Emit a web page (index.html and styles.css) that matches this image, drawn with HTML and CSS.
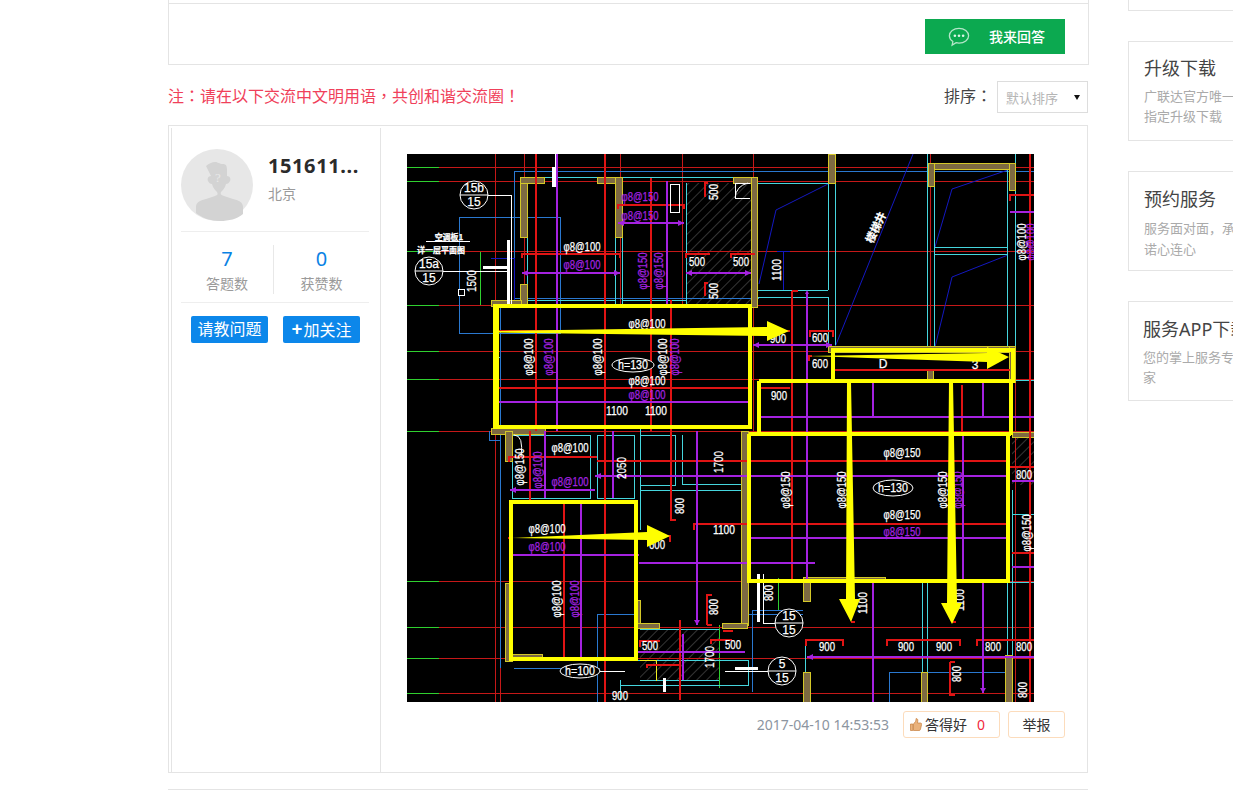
FILE: index.html
```html
<!DOCTYPE html>
<html lang="zh-CN">
<head>
<meta charset="utf-8">
<title>答疑详情</title>
<link rel="stylesheet" href="styles.css">
</head>
<body>
<div class="page">
  <main class="main">
    <section class="answer-box">
      <div class="answer-inner">
        <a class="answer-btn">
          <svg class="chat-icon" viewBox="0 0 24 24" width="24" height="22"><path class="chat-line" d="M12 2.500c-5.800 0-10.500 3.600-10.500 8.200 0 2.600 1.500 4.800 3.800 6.300l-.8 3.800 4.300-2.600c1 .2 2 .4 3.200.4 5.800 0 10.500-3.500 10.500-7.900S17.800 2.500 12 2.500z"/><circle class="chat-dot" cx="7.500" cy="10.700" r="1.400"/><circle class="chat-dot" cx="12" cy="10.700" r="1.400"/><circle class="chat-dot" cx="16.500" cy="10.700" r="1.400"/></svg>
          <span>我来回答</span>
        </a>
      </div>
    </section>

    <div class="notice-row">
      <p class="notice" lang="zh-Hant">注：请在以下交流中文明用语，共创和谐交流圈！</p>
      <div class="sort">
        <span class="sort-label" lang="zh-Hant">排序：</span>
        <div class="sort-select"><span>默认排序</span><i class="caret"></i></div>
      </div>
    </div>

    <article class="reply">
      <aside class="author">
        <div class="author-head">
          <svg class="avatar" viewBox="0 0 72 72" width="72" height="72">
            <circle class="avatar-bg" cx="36" cy="36" r="36"/>
            <path class="avatar-fg" d="M25 17c4-3 6-4 9-4 3 0 4 2 8 2 3 0 4 2 4 6v6c3 0 4 3 3 5-1 2-2 3-4 3-1 4-3 6-5 8-1 2 0 3 3 4l9 3c5 1 10 3 10 8v7c-6 5-14 7-23 7s-18-3-24-8v-6c0-5 5-7 10-8l9-3c3-1 3-2 2-4-2-2-4-4-5-8-2 0-3-1-4-3-1-2 0-5 3-5z"/>
            <text class="avatar-q" x="37" y="28">?</text>
          </svg>
          <div class="author-meta">
            <div class="author-name">151611...</div>
            <div class="author-city">北京</div>
          </div>
        </div>
        <div class="stats">
          <div class="stat"><b>7</b><span>答题数</span></div>
          <div class="stat stat-last"><b>0</b><span>获赞数</span></div>
        </div>
        <div class="author-actions">
          <a class="blue-btn">请教问题</a>
          <a class="blue-btn"><em>+</em>加关注</a>
        </div>
      </aside>

      <div class="reply-body">
        <svg class="cad" viewBox="407 154 627 548" width="627" height="548">
          <defs>
            <pattern id="hatch" width="7" height="7" patternUnits="userSpaceOnUse" patternTransform="rotate(45)"><line class="hatch-line" x1="0" y1="0" x2="0" y2="7"/></pattern>
          </defs>
          <rect class="bg" x="407" y="154" width="627" height="548"/>

          <rect class="hatch" x="686" y="183" width="65" height="122"/>
          <rect class="hatch" x="640" y="629" width="79" height="51"/>
          <rect class="hatch" x="1012" y="435" width="22" height="50"/>

          <path class="green" d="M407 167H439M407 181H439M407 251H439M407 305H439M407 351H439M407 379H439M407 431H439M407 581H439M407 627H439M407 658H439M407 693H439M480 251V306M719 625V688M778 578V610M605 688V702"/>
          <path class="thin-red" d="M439 167H1034M439 181H1034M439 251H1034M439 305H1034M439 351H1034M439 379H1034M439 431H1034M439 581H1034M439 627H1034M439 658H1034M439 693H1034M495 154V702M500 431V702M524 154V305M620 154V305M682 154V305M753 154V432M930 154V348M1015 154V702"/>
          <path class="blue" d="M514 305V171H1034M459 217H560V333H459ZM500 305V431M489 431V440H500M514 668H600M500 668V431M597 702V614H640M752 692V610H803M747 614H803M889 702V672H1007M759 298H514V305M748 565V610M595 660H640"/>
          <path class="navy" d="M759 284L776 210L828 184M835 347L913 154M935 247L952 189L1008 170M935 347L952 277L1008 255"/>
          <path class="navy-grid" d="M491 258H514V305M777 251H790M777 290H790M783 251V290"/>
          <path class="cyan" d="M522 177H751M527 183V305M615 183V305M622 183V305M686 183V305M757 183V307M757 183H828M828 183V290M757 290H828M757 297H828M828 297V346M835 154V345M927 154V347M934 169V347M1007 169V347M934 247H1007M934 254H1007M1015 154V347M527 300H615M622 300H686M512 435H590V498H512ZM597 435H634V498H597ZM640 435H675V485H640ZM682 435V484H747M640 490H747M640 485V530M1012 380H1034M1012 490V640M1012 514H1034M1012 582H1034M922 582V672M927 582V672M805 582H1012M1007 582V702M640 680H719M640 629H719M620 680V700M805 640V702M510 428H640M634 660H748V685H620M497 357H500M1012 640V702M640 435V428"/>
          <path class="thin-yellow" d="M640 660H656V681"/>

          <rect class="wall" x="520" y="177" width="7" height="60"/>
          <rect class="wall" x="520" y="177" width="24" height="6"/>
          <rect class="wall" x="597" y="177" width="25" height="6"/>
          <rect class="wall" x="615" y="177" width="7" height="60"/>
          <rect class="wall" x="520" y="284" width="7" height="22"/>
          <rect class="wall" x="491" y="300" width="30" height="6"/>
          <rect class="wall" x="733" y="177" width="24" height="6"/>
          <rect class="wall" x="751" y="177" width="6" height="130"/>
          <rect class="wall" x="828" y="154" width="7" height="29"/>
          <rect class="wall" x="928" y="163" width="87" height="6"/>
          <rect class="wall" x="928" y="163" width="6" height="23"/>
          <rect class="wall" x="1009" y="163" width="6" height="27"/>
          <rect class="wall" x="828" y="346" width="187" height="6"/>
          <rect class="wall" x="1009" y="346" width="6" height="36"/>
          <rect class="wall" x="927" y="370" width="6" height="10"/>
          <rect class="wall" x="491" y="428" width="54" height="6"/>
          <rect class="wall" x="505" y="431" width="7" height="30"/>
          <rect class="wall" x="505" y="583" width="7" height="78"/>
          <rect class="wall" x="512" y="654" width="30" height="6"/>
          <rect class="wall" x="635" y="600" width="5" height="28"/>
          <rect class="wall" x="635" y="623" width="24" height="5"/>
          <rect class="wall" x="741" y="431" width="7" height="194"/>
          <rect class="wall" x="722" y="623" width="25" height="5"/>
          <rect class="wall" x="803" y="577" width="82" height="5"/>
          <rect class="wall" x="803" y="582" width="7" height="19"/>
          <rect class="wall" x="803" y="672" width="7" height="30"/>
          <rect class="wall" x="921" y="672" width="6" height="30"/>
          <rect class="wall" x="1005" y="655" width="7" height="47"/>
          <rect class="wall" x="1012" y="432" width="22" height="5"/>

          <path class="red" d="M536 154V431M605 154V702M651 178V431M671 300V520H676M522 258V254H620V258M618 209V205H684V209M705 197V183H708M705 296V283H708M686 258V254H710M731 258V254H755M810 337V331H833V337M497 331H790M497 388H750M792 291V581M792 291H798M757 388H790M809 361V356H812M835 370H1010M1010 201V195H1034M1030 154V702M509 462V457H597M530 431V503M564 502V658M597 461H1008M508 538H512M700 524H747M694 530V524H700M747 524H1008M707 625H712M707 625V595H712M1010 467H1034M1012 553H1034M806 646V640H843V646M887 646V640H960V646M977 646V640H1034M950 662H955M950 662V695H955M640 647V641H660M647 668V665H680M711 644V640H732M723 631H733M680 620V700M851 622H855M952 622H956M639 536H670V542M962 385V432"/>
          <path class="purple" d="M557 154V431M667 181V305M522 273H620M618 223H684M686 273H751M753 345H832M807 294V581M497 402H750M758 417H1034M873 383V417M983 383V417M1010 212H1034M545 431V498M613 431V498M510 490H595M595 476H1008M581 502V658M512 555H639M639 563H815M697 431V625M747 538H1008M963 432V580M637 652H745M1012 481H1034M1012 567H1034M807 657H1034M873 582V702M983 582V693M683 634V680"/>
          <path class="arrow-tips" d="M522 273l6-3v6zM620 273l-6-3v6zM618 223l6-3v6zM684 223l-6-3v6zM686 273l6-3v6zM751 273l-6-3v6zM753 345l6-3v6zM832 345l-6-3v6zM805 294l2-4 2 4zM510 490l6-3v6zM595 476l6-3v6zM639 555l-5-3v6zM807 657l6-3v6zM983 693l-3-5h6zM697 625l-3-5h6z"/>

          <path class="white-thick" d="M508 240V304M483 267H507M758 574V622M735 668H758M664 678V692M553 167V187"/>
          <path class="white-line" d="M487 195H511V305M443 271H507M426 241H470M555 154V187M763 574V623H775M725 671H768M600 671H625M670 184H679V212H670V184M735 198V183H750M735 198H750"/>
          <path class="white-curve" d="M735 198Q736 186 748 183M514 435Q524 435 521 457"/>
          <rect class="white-square" x="458" y="289" width="6" height="6"/>

          <g class="bubble">
            <circle cx="474" cy="195" r="14"/><path d="M460 195H488"/>
            <circle cx="429" cy="271" r="14"/><path d="M415 271H443"/>
            <circle cx="789" cy="623" r="14"/><path d="M775 623H803"/>
            <circle cx="782" cy="671" r="14"/><path d="M768 671H796"/>
            <ellipse cx="633" cy="365" rx="21" ry="7"/>
            <ellipse cx="893" cy="488" rx="20" ry="8"/>
            <ellipse cx="580" cy="671" rx="20" ry="7"/>
          </g>

          <g class="t">
            <text x="474" y="188">15b</text><text x="474" y="202">15</text>
            <text x="429" y="264">15a</text><text x="429" y="278">15</text>
            <text x="789" y="616">15</text><text x="789" y="630">15</text>
            <text x="782" y="664">5</text><text x="782" y="678">15</text>
            <text class="t-small" x="449" y="236">空调板1</text>
            <text class="t-small" x="441" y="249">详一层平面图</text>
            <text x="582" y="247" textLength="37" lengthAdjust="spacingAndGlyphs">φ8@100</text>
            <text x="647" y="324" textLength="37" lengthAdjust="spacingAndGlyphs">φ8@100</text>
            <text x="647" y="381" textLength="37" lengthAdjust="spacingAndGlyphs">φ8@100</text>
            <text x="570" y="448" textLength="37" lengthAdjust="spacingAndGlyphs">φ8@100</text>
            <text x="547" y="529" textLength="37" lengthAdjust="spacingAndGlyphs">φ8@100</text>
            <text x="902" y="453" textLength="37" lengthAdjust="spacingAndGlyphs">φ8@150</text>
            <text x="902" y="515" textLength="37" lengthAdjust="spacingAndGlyphs">φ8@150</text>
            <text x="633" y="365" textLength="30" lengthAdjust="spacingAndGlyphs">h=130</text>
            <text x="893" y="488" textLength="30" lengthAdjust="spacingAndGlyphs">h=130</text>
            <text x="580" y="671" textLength="30" lengthAdjust="spacingAndGlyphs">h=100</text>
            <text x="617" y="411" textLength="22" lengthAdjust="spacingAndGlyphs">1100</text>
            <text x="656" y="411" textLength="22" lengthAdjust="spacingAndGlyphs">1100</text>
            <text x="697" y="262" textLength="16" lengthAdjust="spacingAndGlyphs">500</text>
            <text x="741" y="262" textLength="16" lengthAdjust="spacingAndGlyphs">500</text>
            <text x="778" y="339" textLength="16" lengthAdjust="spacingAndGlyphs">900</text>
            <text x="820" y="338" textLength="16" lengthAdjust="spacingAndGlyphs">600</text>
            <text x="820" y="364" textLength="16" lengthAdjust="spacingAndGlyphs">600</text>
            <text x="883" y="364">D</text><text x="975" y="365">3</text>
            <text x="779" y="396" textLength="16" lengthAdjust="spacingAndGlyphs">900</text>
            <text x="724" y="530" textLength="22" lengthAdjust="spacingAndGlyphs">1100</text>
            <text x="657" y="545" textLength="16" lengthAdjust="spacingAndGlyphs">600</text>
            <text x="650" y="646" textLength="16" lengthAdjust="spacingAndGlyphs">500</text>
            <text x="733" y="645" textLength="16" lengthAdjust="spacingAndGlyphs">500</text>
            <text x="620" y="696" textLength="16" lengthAdjust="spacingAndGlyphs">900</text>
            <text x="827" y="647" textLength="16" lengthAdjust="spacingAndGlyphs">900</text>
            <text x="906" y="647" textLength="16" lengthAdjust="spacingAndGlyphs">900</text>
            <text x="944" y="647" textLength="16" lengthAdjust="spacingAndGlyphs">900</text>
            <text x="993" y="647" textLength="16" lengthAdjust="spacingAndGlyphs">800</text>
            <text x="1024" y="647" textLength="16" lengthAdjust="spacingAndGlyphs">800</text>
            <text x="1024" y="475" textLength="16" lengthAdjust="spacingAndGlyphs">800</text>
            <text transform="rotate(-90 472 281)" x="472" y="281" textLength="22" lengthAdjust="spacingAndGlyphs">1500</text>
            <text transform="rotate(-90 714 192)" x="714" y="192" textLength="16" lengthAdjust="spacingAndGlyphs">500</text>
            <text transform="rotate(-90 714 291)" x="714" y="291" textLength="16" lengthAdjust="spacingAndGlyphs">500</text>
            <text transform="rotate(-90 777 270)" x="777" y="270" textLength="22" lengthAdjust="spacingAndGlyphs">1100</text>
            <text transform="rotate(-90 622 468)" x="622" y="468" textLength="22" lengthAdjust="spacingAndGlyphs">2050</text>
            <text transform="rotate(-90 719 462)" x="719" y="462" textLength="22" lengthAdjust="spacingAndGlyphs">1700</text>
            <text transform="rotate(-90 680 506)" x="680" y="506" textLength="16" lengthAdjust="spacingAndGlyphs">800</text>
            <text transform="rotate(-90 710 657)" x="710" y="657" textLength="22" lengthAdjust="spacingAndGlyphs">1700</text>
            <text transform="rotate(-90 714 607)" x="714" y="607" textLength="16" lengthAdjust="spacingAndGlyphs">800</text>
            <text transform="rotate(-90 769 593)" x="769" y="593" textLength="16" lengthAdjust="spacingAndGlyphs">800</text>
            <text transform="rotate(-90 863 603)" x="863" y="603" textLength="22" lengthAdjust="spacingAndGlyphs">1100</text>
            <text transform="rotate(-90 960 600)" x="960" y="600" textLength="22" lengthAdjust="spacingAndGlyphs">1100</text>
            <text transform="rotate(-90 957 674)" x="957" y="674" textLength="16" lengthAdjust="spacingAndGlyphs">800</text>
            <text transform="rotate(-90 1023 690)" x="1023" y="690" textLength="16" lengthAdjust="spacingAndGlyphs">800</text>
            <text transform="rotate(-90 529 357)" x="529" y="357" textLength="37" lengthAdjust="spacingAndGlyphs">φ8@100</text>
            <text transform="rotate(-90 598 357)" x="598" y="357" textLength="37" lengthAdjust="spacingAndGlyphs">φ8@100</text>
            <text transform="rotate(-90 663 357)" x="663" y="357" textLength="37" lengthAdjust="spacingAndGlyphs">φ8@100</text>
            <text transform="rotate(-90 1022 242)" x="1022" y="242" textLength="37" lengthAdjust="spacingAndGlyphs">φ8@100</text>
            <text transform="rotate(-90 520 467)" x="520" y="467" textLength="37" lengthAdjust="spacingAndGlyphs">φ8@150</text>
            <text transform="rotate(-90 557 599)" x="557" y="599" textLength="37" lengthAdjust="spacingAndGlyphs">φ8@100</text>
            <text transform="rotate(-90 786 490)" x="786" y="490" textLength="37" lengthAdjust="spacingAndGlyphs">φ8@150</text>
            <text transform="rotate(-90 842 490)" x="842" y="490" textLength="37" lengthAdjust="spacingAndGlyphs">φ8@150</text>
            <text transform="rotate(-90 943 490)" x="943" y="490" textLength="37" lengthAdjust="spacingAndGlyphs">φ8@150</text>
            <text transform="rotate(-90 1027 533)" x="1027" y="533" textLength="37" lengthAdjust="spacingAndGlyphs">φ8@150</text>
            <text class="t-diag" transform="rotate(-65 875 227)" x="875" y="227">楼梯井</text>
          </g>
          <g class="t tp">
            <text x="582" y="265" textLength="37" lengthAdjust="spacingAndGlyphs">φ8@100</text>
            <text x="640" y="197" textLength="37" lengthAdjust="spacingAndGlyphs">φ8@150</text>
            <text x="640" y="216" textLength="37" lengthAdjust="spacingAndGlyphs">φ8@150</text>
            <text x="647" y="395" textLength="37" lengthAdjust="spacingAndGlyphs">φ8@100</text>
            <text x="570" y="482" textLength="37" lengthAdjust="spacingAndGlyphs">φ8@100</text>
            <text x="547" y="547" textLength="37" lengthAdjust="spacingAndGlyphs">φ8@100</text>
            <text x="902" y="532" textLength="37" lengthAdjust="spacingAndGlyphs">φ8@150</text>
            <text transform="rotate(-90 643 271)" x="643" y="271" textLength="37" lengthAdjust="spacingAndGlyphs">φ8@150</text>
            <text transform="rotate(-90 659 271)" x="659" y="271" textLength="37" lengthAdjust="spacingAndGlyphs">φ8@150</text>
            <text transform="rotate(-90 549 357)" x="549" y="357" textLength="37" lengthAdjust="spacingAndGlyphs">φ8@100</text>
            <text transform="rotate(-90 675 357)" x="675" y="357" textLength="37" lengthAdjust="spacingAndGlyphs">φ8@100</text>
            <text transform="rotate(-90 538 470)" x="538" y="470" textLength="37" lengthAdjust="spacingAndGlyphs">φ8@100</text>
            <text transform="rotate(-90 575 599)" x="575" y="599" textLength="37" lengthAdjust="spacingAndGlyphs">φ8@100</text>
            <text transform="rotate(-90 958 490)" x="958" y="490" textLength="37" lengthAdjust="spacingAndGlyphs">φ8@150</text>
            <text transform="rotate(-90 1031 242)" x="1031" y="242" textLength="37" lengthAdjust="spacingAndGlyphs">φ8@100</text>
          </g>

          <path class="marker" d="M495 306H750V427H495Z"/>
          <path class="marker-heavy" d="M496 306V427"/>
          <path class="marker" d="M759 381H1011V435M759 381V434"/>
          <path class="marker" d="M833 350H1013V381H833Z"/>
          <path class="marker" d="M749 434H1011M749 434V581H1008V434"/>
          <path class="marker" d="M511 502H636V659H511Z"/>
          <polygon class="fill-yellow" points="497,331 767,327 767,321 789,331 767,341 767,336 497,332.500"/>
          <polygon class="fill-yellow" points="808,356 987,353 987,347 1009,357 987,369 987,362"/>
          <polygon class="fill-yellow" points="512,538 647,532 647,525 670,536 647,547 647,540"/>
          <polygon class="fill-yellow" points="847,382 851,382 855,599 860,599 851,622 839,599 846,599"/>
          <polygon class="fill-yellow" points="949,382 953,382 957,603 962,603 952,624 941,603 947,603"/>
        </svg>

        <footer class="reply-foot">
          <time class="time">2017-04-10 14:53:53</time>
          <a class="ghost-btn good">
            <svg class="thumb" viewBox="0 0 12 13" width="12" height="13"><path class="thumb-fill" d="M.500 6h2.300v6.500H.500zM3.500 6l2-2.500c.5-.8.500-2 .6-3 1.200 0 1.900 1 1.700 2.300L7.500 5h3c.9 0 1.300.8 1.100 1.500l-1.200 5c-.2.700-.6 1-1.300 1H3.500z"/></svg>
            <span>答得好</span><b>0</b>
          </a>
          <a class="ghost-btn report">举报</a>
        </footer>
      </div>
    </article>
    <div class="rule"></div>
  </main>

  <aside class="side">
    <div class="card card-cut"></div>
    <div class="card card-first">
      <h3>升级下载</h3>
      <p>广联达官方唯一<br>指定升级下载</p>
    </div>
    <div class="card card-loose">
      <h3>预约服务</h3>
      <p>服务面对面，承<br>诺心连心</p>
    </div>
    <div class="card card-app">
      <h3>服务APP下载</h3>
      <p>您的掌上服务专<br>家</p>
    </div>
  </aside>
</div>
</body>
</html>
```

FILE: styles.css
```css
* { box-sizing: border-box; }
html, body { margin: 0; padding: 0; height: 810px; overflow: hidden; background: #fff; }
body { font-family: "Noto Sans", "Noto Sans CJK SC", sans-serif; color: #333; }
p, h3 { margin: 0; font-weight: normal; }
a { display: block; }

.page { display: flex; align-items: flex-start; padding-left: 168px; width: 1500px; }
.main { width: 921px; flex: none; }

.answer-box { border: 1px solid #e4e4e4; border-top: 0; padding-top: 3px; height: 65px; }
.answer-inner { border-top: 1px solid #e4e4e4; height: 61px; padding: 15px 23px 0 0; display: flex; justify-content: flex-end; }
.answer-btn { width: 140px; height: 35px; background: #0ca950; color: #fff; display: flex; align-items: center; font-size: 14px; line-height: 20px; padding-left: 22px; gap: 18px; font-weight: 500; }
.chat-icon { flex: none; }
.chat-line { fill: none; stroke: #b5e6c9; stroke-width: 1.4; }
.chat-dot { fill: #dff5e8; }

.notice-row { width: 920px; margin-top: 16px; height: 32px; display: flex; justify-content: space-between; align-items: center; }
.notice { font-family: "Noto Sans CJK TC", sans-serif; font-size: 16px; line-height: 28px; color: #f0405a; margin-bottom: 4px; }
.sort { display: flex; align-items: center; }
.sort-label { font-family: "Noto Sans CJK TC", sans-serif; font-size: 16px; line-height: 24px; color: #444; width: 53px; margin-bottom: 4px; }
.sort-select { width: 91px; height: 32px; border: 1px solid #ddd; display: flex; align-items: center; justify-content: space-between; padding: 1px 7px 0 8px; font-size: 13px; color: #b5b5b5; }
.caret { width: 0; height: 0; border-left: 3.500px solid transparent; border-right: 3.500px solid transparent; border-top: 5px solid #111; }

.reply { width: 920px; height: 648px; margin-top: 12px; border: 1px solid #e4e4e4; display: flex; padding-top: 2px; }
.author { width: 210px; flex: none; margin-left: 2px; border-left: 1px solid #e4e4e4; border-right: 1px solid #e4e4e4; padding: 21px 11px 0 9px; }
.author-head { display: flex; gap: 15px; border-bottom: 1px solid #eee; height: 83px; }
.avatar { flex: none; }
.avatar-bg { fill: #e7e7e7; }
.avatar-fg { fill: #d3d3d3; }
.avatar-q { fill: #e8e8e8; font-size: 13px; text-anchor: middle; dominant-baseline: central; font-family: "Liberation Serif", serif; }
.author-name { font-size: 20px; line-height: 28px; font-weight: 700; color: #2b2b2b; margin-top: 3px; letter-spacing: .6px; white-space: nowrap; }
.author-city { font-size: 14px; line-height: 20px; color: #9a9a9a; margin-top: 4px; }

.stats { display: flex; height: 71px; border-bottom: 1px solid #eee; padding-top: 13px; }
.stat { width: 93px; height: 49px; border-right: 1px solid #e8e8e8; display: flex; flex-direction: column; align-items: center; }
.stat-last { width: 95px; border-right: 0; }
.stat b { font-size: 20px; line-height: 28px; font-weight: 400; color: #0a82e4; }
.stat span { font-size: 14px; line-height: 20px; color: #9a9a9a; margin-top: 1px; }

.author-actions { display: flex; gap: 15px; margin: 13px 0 0 10px; }
.blue-btn { width: 77px; height: 27px; background: #0c87ea; color: #fff; border-radius: 2px; font-size: 16px; line-height: 27px; text-align: center; white-space: nowrap; }
.blue-btn em { font-style: normal; font-weight: 700; font-size: 19px; margin-right: 1px; }

.reply-body { padding: 26px 0 0 26px; width: 680px; }
.cad { display: block; }
.reply-foot { display: flex; justify-content: flex-end; align-items: center; margin-top: 9px; width: 658px; height: 27px; }
.time { font-size: 14px; color: #8c95a0; margin-right: 14px; white-space: nowrap; }
.ghost-btn { height: 27px; border: 1px solid #fcdcbc; border-radius: 3px; font-size: 14px; line-height: 25px; color: #333; background: #fff; }
.good { width: 97px; display: flex; align-items: center; padding-left: 6px; }
.good span { margin-left: 3px; }
.good b { margin-left: 10px; font-weight: 400; color: #f0283c; }
.thumb { flex: none; }
.thumb-fill { fill: #eab27c; stroke: #c67f3f; stroke-width: .7; }
.report { width: 57px; margin-left: 8px; text-align: center; }

.rule { width: 920px; margin-top: 16px; border-top: 1px solid #e4e4e4; }

.side { margin-left: 39px; width: 200px; flex: none; display: flex; flex-direction: column; gap: 30px; }
.card { width: 200px; height: 100px; border: 1px solid #e4e4e4; padding: 15px 0 0 15px; }
.card h3 { font-size: 18px; line-height: 24px; color: #444; white-space: nowrap; }
.card p { font-size: 13px; line-height: 20px; color: #aaa; margin-top: 6px; white-space: nowrap; }
.card-cut { height: 11px; border-top: 0; padding: 0; }
.card-first { padding-top: 14px; }
.card-loose p { line-height: 21px; margin-top: 7px; }
.card-app { padding-left: 14px; }

.bg { fill: #000; }
.hatch { fill: url(#hatch); }
.hatch-line { stroke: #6a6a6a; stroke-width: 1; }
.green, .thin-red, .blue, .navy, .navy-grid, .cyan, .thin-yellow, .red, .purple, .white-thick, .white-line, .white-curve, .marker, .marker-heavy { fill: none; }
.green, .thin-red, .blue, .navy-grid, .cyan, .thin-yellow, .red, .purple, .white-thick, .white-line, .marker, .marker-heavy, .wall, .white-square { shape-rendering: crispEdges; }
.green { stroke: #2fd02f; stroke-width: 1; }
.thin-red { stroke: #c51818; stroke-width: 1; }
.blue { stroke: #2a78d0; stroke-width: 1; }
.navy, .navy-grid { stroke: #1418c0; stroke-width: 1; }
.cyan { stroke: #45d5dd; stroke-width: 1; }
.thin-yellow { stroke: #f0f020; stroke-width: 1; }
.wall { fill: #7d6a42; stroke: #d4c828; stroke-width: 1; }
.red { stroke: #e01414; stroke-width: 2; }
.purple { stroke: #a522e0; stroke-width: 2; }
.arrow-tips { fill: #a522e0; }
.white-thick { stroke: #fff; stroke-width: 3; }
.white-line, .white-curve { stroke: #fff; stroke-width: 1; }
.white-square { fill: #000; stroke: #fff; stroke-width: 1; }
.bubble circle, .bubble ellipse { fill: #000; stroke: #fff; stroke-width: 1; }
.bubble path { fill: none; stroke: #fff; stroke-width: 1; }
.t text { font-family: "Liberation Sans", sans-serif; font-size: 12px; fill: #fff; stroke: #fff; stroke-width: .25; text-anchor: middle; dominant-baseline: central; }
.t .t-small { font-family: "Noto Sans CJK SC", sans-serif; font-size: 8px; font-weight: 700; }
.t .t-diag { font-family: "Noto Sans CJK SC", sans-serif; font-size: 11px; font-weight: 700; }
.t.tp text { fill: #a522e0; stroke: #a522e0; }
.marker { stroke: #ffff00; stroke-width: 4; }
.marker-heavy { stroke: #ffff00; stroke-width: 6; }
.fill-yellow { fill: #ffff00; }
```
